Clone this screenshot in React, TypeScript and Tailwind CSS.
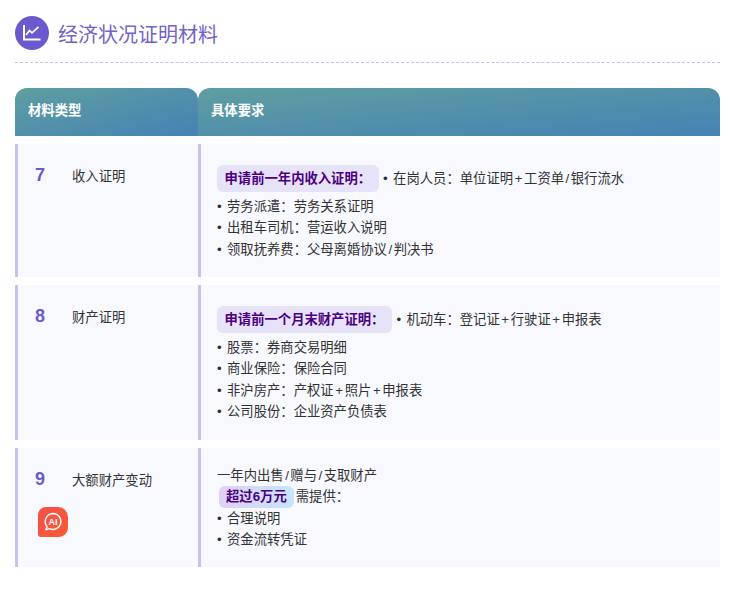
const font = { fontFamily: '"Liberation Sans", "Noto Sans CJK SC", sans-serif' }

function TrendIcon() {
  return (
    <svg width="18" height="18" viewBox="0 0 18 18" fill="none" stroke="white" strokeWidth="2">
      <path d="M1 1V15.500H17.500" />
      <path d="M3 11L6.500 6.500L9 8.800L15.500 2.800" strokeWidth="1.700" />
    </svg>
  )
}

function AiBadge() {
  return (
    <div className="mt-[17px] ml-[3px] w-[30px] h-[30px] flex items-center justify-center rounded-tl-[8px] rounded-tr-[10px] rounded-br-[9px] rounded-bl-[3px] bg-gradient-to-br from-[#f4504a] to-[#fb5a32]">
      <svg width="24" height="24" viewBox="0 0 24 24" fill="none">
        <path d="M12 3.500a8 8 0 1 1-3.600 15.200L5 19.800l1.100-3.200A8 8 0 0 1 12 3.500z" stroke="white" strokeWidth="1.400" strokeLinejoin="round" />
        <text x="12" y="15" textAnchor="middle" fontSize="9" fontWeight="700" fill="white" fontFamily="Liberation Sans, sans-serif">AI</text>
      </svg>
    </div>
  )
}

// + and / sit wider in the reference than in the fallback font
function T({ text }: { text: string }) {
  return (
    <>
      {text.split(/([+/])/).map((part, i) =>
        part === '+' ? <span key={i} className="inline-block w-[11px] text-center">+</span>
        : part === '/' ? <span key={i} className="inline-block w-[6.700px] text-center">/</span>
        : part
      )}
    </>
  )
}

function Bullet() {
  return <span className="inline-block w-[10px] text-[#2c2c3a]">•</span>
}

function Pill({ text }: { text: string }) {
  return (
    <span className="inline-block h-[27px] px-[7.500px] mr-[4.500px] leading-[27px] rounded-[6px] bg-[#e6e2f8] text-[#4b0082] font-bold whitespace-nowrap">
      {text}
    </span>
  )
}

function Item({ text }: { text: string }) {
  return <div className="h-[21.500px] leading-[21.500px] whitespace-nowrap"><Bullet /><T text={text} /></div>
}

function Row({ num, label, height, extra, children }: { num: number; label: string; height: string; extra?: React.ReactNode; children: React.ReactNode }) {
  return (
    <div className={`flex mb-2 bg-[#f8f9ff] ${height}`}>
      <div className="w-[183px] shrink-0 border-l-[3px] border-[#c9c0f0] pl-[17px] pt-[20px]">
        <div className="flex items-center h-[22px]">
          <span className="w-[37px] text-[18px] font-bold text-[#6a5acd]">{num}</span>
          <span className="pt-[3px] text-[13.330px] text-[#333333]">{label}</span>
        </div>
        {extra}
      </div>
      <div className="flex-1 border-l-[3px] border-[#c9c0f0] pl-[16px] text-[13.330px] text-[#333333]">
        {children}
      </div>
    </div>
  )
}

export default function App() {
  return (
    <div className="w-[739px] h-[591px] bg-white overflow-hidden pl-[15px] pr-[19px] pt-[16px]" style={font}>
      <div className="flex items-center gap-[9px] h-[34px]">
        <div className="w-[34px] h-[34px] rounded-full bg-[#6a5acd] flex items-center justify-center">
          <TrendIcon />
        </div>
        <h1 className="pt-[3px] text-[20px] font-normal text-[#7263c9]">经济状况证明材料</h1>
      </div>
      <div className="mt-[12px] border-b border-dashed border-[#c9c0f0]" />

      <div className="mt-[25px] flex h-[48px] text-[13.330px] font-bold text-white">
        <div className="w-[183px] shrink-0 rounded-t-[12px] pl-[13px] pb-[2px] flex items-center bg-gradient-to-br from-[#5f9ea0] to-[#4682b4]">材料类型</div>
        <div className="flex-1 rounded-t-[12px] pl-[13px] pb-[2px] flex items-center bg-gradient-to-br from-[#5f9ea0] to-[#4682b4]">具体要求</div>
      </div>

      <div className="mt-2">
        <Row num={7} label="收入证明" height="h-[133px]">
          <div className="pt-[21px]">
            <div className="flex items-center h-[27px] mb-[3.500px] whitespace-nowrap">
              <Pill text="申请前一年内收入证明：" /><span><Bullet /><T text="在岗人员：单位证明+工资单/银行流水" /></span>
            </div>
            <Item text="劳务派遣：劳务关系证明" />
            <Item text="出租车司机：营运收入说明" />
            <Item text="领取抚养费：父母离婚协议/判决书" />
          </div>
        </Row>
        <Row num={8} label="财产证明" height="h-[155px]">
          <div className="pt-[21px]">
            <div className="flex items-center h-[27px] mb-[3.500px] whitespace-nowrap">
              <Pill text="申请前一个月末财产证明：" /><span><Bullet /><T text="机动车：登记证+行驶证+申报表" /></span>
            </div>
            <Item text="股票：券商交易明细" />
            <Item text="商业保险：保险合同" />
            <Item text="非沪房产：产权证+照片+申报表" />
            <Item text="公司股份：企业资产负债表" />
          </div>
        </Row>
        <Row num={9} label="大额财产变动" height="h-[119px]" extra={<AiBadge />}>
          <div className="pt-[16.500px]">
            <div className="h-[21.500px] leading-[21.500px]"><T text="一年内出售/赠与/支取财产" /></div>
            <div className="h-[21.500px] leading-[21.500px] flex items-center whitespace-nowrap">
              <span className="ml-[2px] mr-[2px] px-[7px] h-[22px] leading-[22px] rounded-[6px] font-bold text-[#4b0082] bg-gradient-to-r from-[#e0d0f5] to-[#c6e6fb]">超过6万元</span>
              <span>需提供：</span>
            </div>
            <Item text="合理说明" />
            <Item text="资金流转凭证" />
          </div>
        </Row>
      </div>
    </div>
  )
}
